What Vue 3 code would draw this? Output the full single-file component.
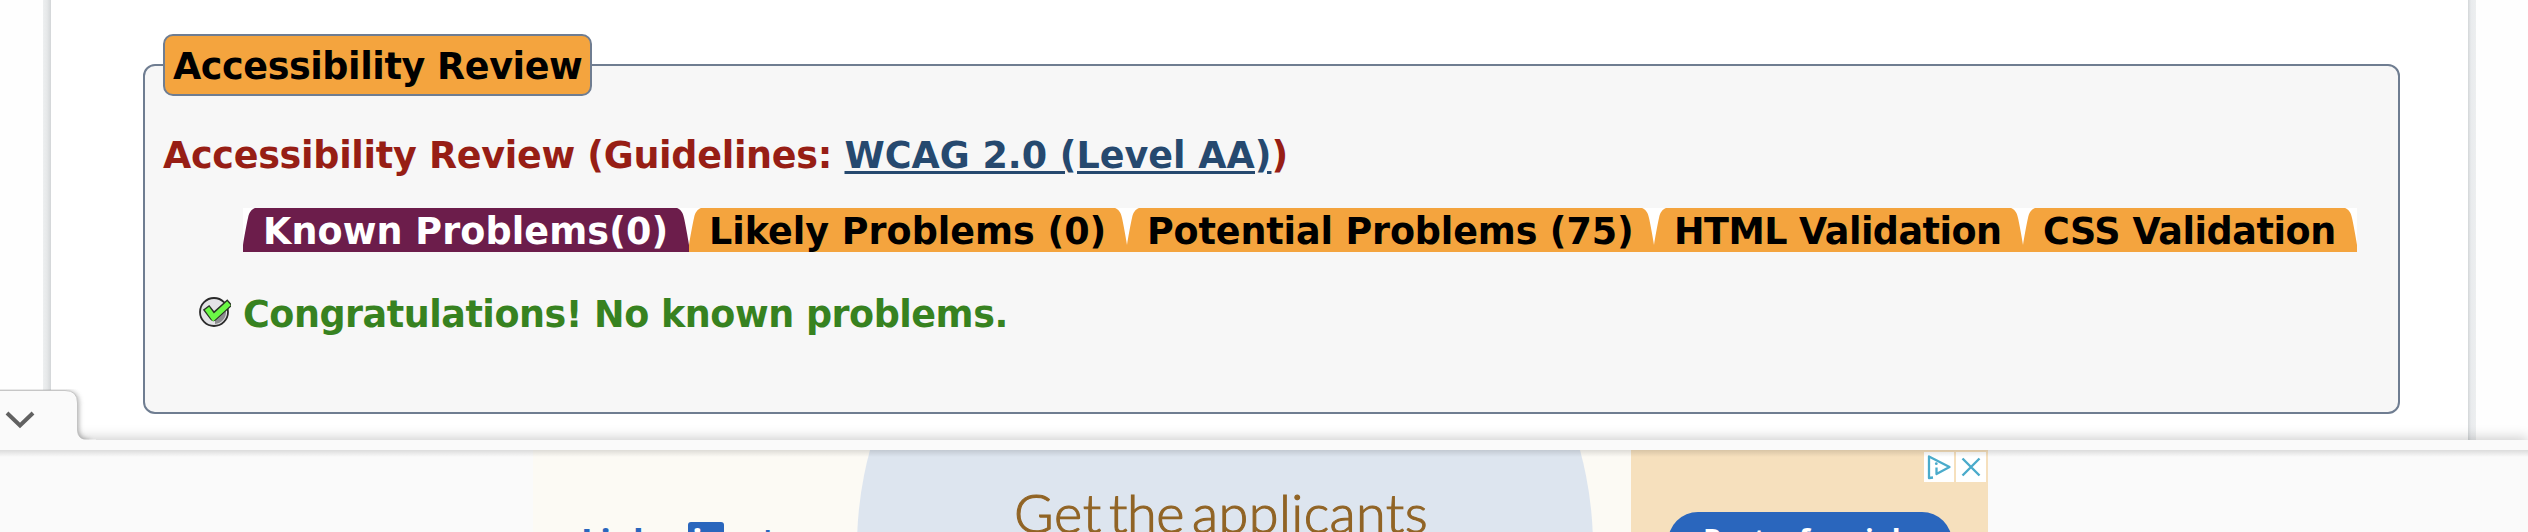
<script setup>
const tabs = [
  { id: 'known', label: 'Known Problems(0)', active: true },
  { id: 'likely', label: 'Likely Problems (0)' },
  { id: 'potential', label: 'Potential Problems (75)' },
  { id: 'html', label: 'HTML Validation' },
  { id: 'css', label: 'CSS Validation' },
]
</script>

<template>
  <div class="screen">
    <main class="sheet">
      <section class="review">
        <h1 class="legend"><span>Accessibility Review</span></h1>
        <h2 class="title"><span class="lead">Accessibility Review (Guidelines: </span><a class="link">WCAG 2.0 (Level AA)</a><span>)</span></h2>
        <nav class="tabs">
          <div v-for="t in tabs" :key="t.id" class="tab" :class="[t.id, { active: t.active }]">
            <svg class="corner" width="12" height="44" viewBox="0 0 12 44"><path d="M0 37 C1 30 4 14 5 10 C6 4 9 1 12 0 V44 H0 Z" /></svg>
            <div class="face"><span>{{ t.label }}</span></div>
            <svg class="corner flip" width="12" height="44" viewBox="0 0 12 44"><path d="M0 37 C1 30 4 14 5 10 C6 4 9 1 12 0 V44 H0 Z" /></svg>
          </div>
        </nav>
        <p class="result">
          <svg class="ok" width="32" height="30" viewBox="0 0 32 30">
            <circle cx="15" cy="15" r="14" fill="#e3e3e6" stroke="#2a2a2a" stroke-width="1.800" />
            <path d="M27 14 A12 12 0 0 1 16 27 L16 21 Z" fill="#8d8d90" />
            <path d="M9.500 13.500 L14.500 20 L28 8" fill="none" stroke="#2a3226" stroke-width="8" stroke-linejoin="round" stroke-linecap="square" />
            <path d="M9.500 13.500 L14.500 20.500 L28 8" fill="none" stroke="#6bf846" stroke-width="5.300" stroke-linecap="square" />
          </svg>
          <span>Congratulations! No known problems.</span>
        </p>
      </section>
    </main>

    <footer class="dock">
      <svg class="handle" width="96" height="54" viewBox="0 0 96 54">
        <defs><filter id="soft" x="-20%" y="-20%" width="150%" height="150%"><feGaussianBlur stdDeviation="2.500" /></filter></defs>
        <path d="M-10 2 H66 Q79 2 79 15 V40 Q79 51 90 51 V60 H-10 Z" fill="#777" opacity=".6" filter="url(#soft)" />
        <path d="M-1 1.500 H65 Q77.500 1.500 77.500 14 V41 Q77.500 51 89 51 V60 H-1 Z" fill="#fafafa" stroke="#bcbcbc" stroke-width=".8" />
        <path d="M7 24 L20 36.500 L33 24" fill="none" stroke="#616161" stroke-width="4" />
        <rect x="0" y="50.500" width="96" height="4" fill="#fafafa" />
      </svg>
      <div class="strip"></div>
      <div class="adrow">
        <div class="ad">
          <div class="brand">
            <div class="disc"></div>
            <div class="logo"><span class="linked">Linked</span><span class="in">in</span><span class="jobs">Jobs</span></div>
            <div class="headline"><span class="w1">Get</span><span class="w2">the</span><span class="w3">applicants</span></div>
          </div>
          <div class="offer">
            <div class="choices">
              <svg width="30" height="30" viewBox="0 0 30 30"><g fill="none" stroke="#4aabcb" stroke-width="2.300" stroke-linejoin="round"><path d="M9 25.500 L5 26 V4.500 L25.500 15 L12.500 22 V15.500" /></g><circle cx="12.300" cy="11.700" r="1.400" fill="#4aabcb" /></svg>
              <svg width="30" height="30" viewBox="0 0 30 30"><path d="M6.500 6.500 L23.500 23.500 M23.500 6.500 L6.500 23.500" stroke="#4aabcb" stroke-width="2.400" /></svg>
            </div>
            <div class="cta"><span>Post a free job</span></div>
          </div>
        </div>
      </div>
    </footer>
  </div>
</template>

<style>
body { margin: 0; overflow: hidden; }
</style>

<style scoped>
* { box-sizing: border-box; }
.screen {
  position: relative; width: 2528px; height: 532px; overflow: hidden; background: #fefefe;
  font: bold 36.5px/44px "DejaVu Sans", Verdana, sans-serif;
}
.sheet {
  width: 2433px; height: 460px; margin: 0 0 0 43px; padding: 34px 68px 0 92px;
  border-left: 8px solid #eaebed; border-right: 8px solid #eaebed;
  border-image: linear-gradient(90deg, #edeff0 0, #e6e8e9 4px, #d3d6d8 8px, #d3d6d8 2425px, #e9ebed 2428px, #edeff0 100%) 0 8;
  background: #fff;
}
.review {
  height: 350px; width: 2257px; margin-top: 30px; padding: 0 18px;
  border: 2px solid #6f7d91; border-radius: 12px; background: #f7f7f7;
}
.legend {
  width: 429px; height: 62px; margin: -32px 0 0; padding: 9px 0 0 8px; border: 2px solid #6f7d91;
  border-radius: 10px; background: #f4a43e; color: #000; font-size: inherit; letter-spacing: -.41px; white-space: nowrap;
}
.title {
  height: 44px; margin: 38px 0 0; color: #971e15; font-size: inherit; white-space: pre;
}
.lead { letter-spacing: -.28px; }
.link { color: #26496f; text-decoration: underline; text-decoration-thickness: 3px; text-underline-offset: 3px; }
.tabs { display: flex; width: 2114px; height: 44px; margin: 30px 0 0 80px; background: #fff; }
.tab { display: flex; fill: #f4a43e; color: #000; }
.tab.active { fill: #6c1d4b; color: #fff; }
.face { flex: 1; background: #f4a43e; white-space: nowrap; padding-left: 8px; line-height: 48px; height: 44px; }
.active .face { background: #6c1d4b; }
.corner { display: block; flex: none; }
.flip { transform: scaleX(-1); }
.known { width: 446px; letter-spacing: .1px; }
.likely { width: 438px; }
.potential { width: 527px; letter-spacing: -.14px; }
.html { width: 369px; letter-spacing: -.53px; }
.css { width: 334px; letter-spacing: -.43px; }
.result { display: flex; height: 44px; margin: 41px 0 0 36px; color: #378220; letter-spacing: -.48px; white-space: nowrap; }
.ok { margin: 4px 12px 0 0; flex: none; }
.dock { position: absolute; left: 0; right: 0; top: 440px; height: 92px; background: #fafafa; box-shadow: 0 -2px 12px rgba(0, 0, 0, .2); }
.handle { position: absolute; left: 0; top: -51px; display: block; }
.strip { height: 10px; background: #fafafa; }
.adrow { height: 82px; padding-left: 533px; overflow: hidden; position: relative; }
.adrow::after { content: ""; position: absolute; inset: 0 0 auto; height: 7px; background: linear-gradient(rgba(0, 0, 0, .12), transparent); }
.ad { display: flex; width: 1455px; height: 82px; }
.brand { position: relative; width: 1098px; height: 82px; overflow: hidden; background: #fcfaf4; }
.disc { position: absolute; left: 324px; top: -271px; width: 736px; height: 736px; border-radius: 50%; background: #dde5ef; }
.logo { position: absolute; left: 48px; top: 72px; display: flex; color: #2a66bd; font: bold 35px/40px "Open Sans", sans-serif; height: 40px; }
.linked { width: 107px; line-height: 40px; letter-spacing: -.5px; }
.in { width: 36px; height: 36px; padding-left: 4px; margin-right: 10px; border-radius: 3px; background: #2a66bd; color: #fff; line-height: 40px; }
.jobs { font-size: 32px; font-weight: 600; line-height: 42px; }
.headline { position: absolute; left: 481px; top: 33px; display: flex; color: #916425; font: 300 54px/60px Lato, sans-serif; -webkit-text-stroke: 1.1px #916425; white-space: nowrap; }
.w1 { width: 95px; letter-spacing: .7px; }
.w2 { width: 83px; letter-spacing: -.5px; }
.w3 { letter-spacing: .4px; }
.offer { width: 357px; height: 82px; background: #f6e0bd; overflow: hidden; }
.choices { display: flex; justify-content: flex-end; gap: 2px; padding: 2px 2px 0 0; }
.choices svg { display: block; background: #fff; }
.cta { width: 284px; height: 60px; margin: 30px 0 0 37px; padding-left: 35px; border-radius: 30px; background: #2a66bd; color: #fff; font: bold 29px/53px "Open Sans", sans-serif; white-space: nowrap; }
</style>
